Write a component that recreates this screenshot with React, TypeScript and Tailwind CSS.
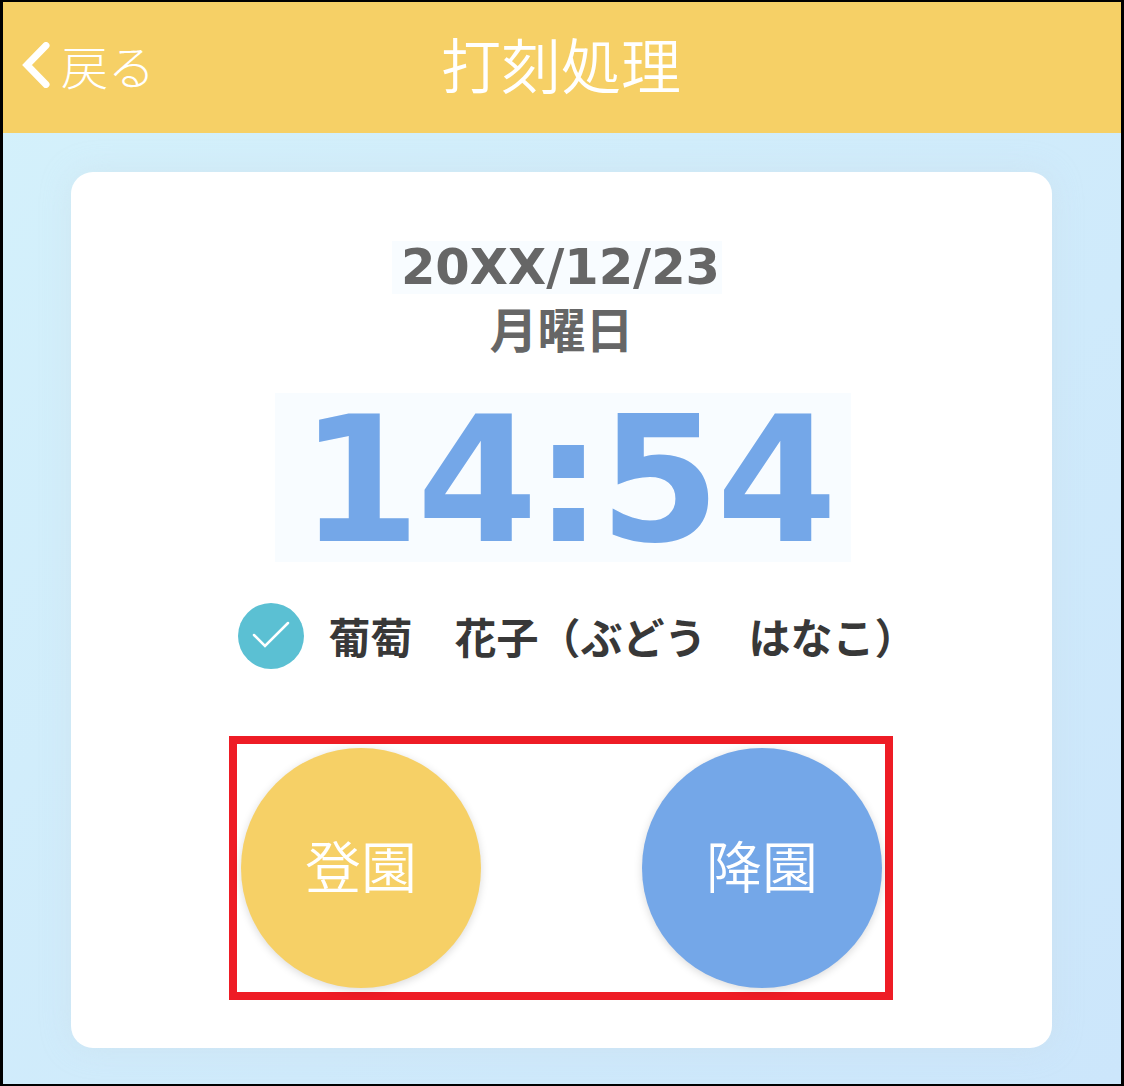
import React from "react";

const jp = "font-['Noto_Sans_CJK_JP','Noto_Sans',sans-serif]";
const mixed = "font-['DejaVu_Sans','Noto_Sans_CJK_JP',sans-serif]";

export default function App() {
  return (
    <div className={`w-[1124px] h-[1086px] flex flex-col border-black border-t-2 border-b-2 border-l-[3px] border-r-[3px] bg-gradient-to-br from-[#d4f1fb] to-[#cce6fb] ${jp}`}>
      <header className="relative h-[131px] shrink-0 bg-[#f6d066] flex items-center justify-center">
        <div className="absolute left-[19px] top-[33px] flex items-center text-white">
          <svg width="28" height="46" viewBox="0 0 28 46" className="mr-[11px]" fill="none">
            <path d="M24 3.5 L5 23 L24 42.5" stroke="#fff" strokeWidth="7" strokeLinecap="round" strokeLinejoin="miter" />
          </svg>
          <span className="text-[47px] leading-[60px] font-light">戻る</span>
        </div>
        <h1 className="text-[60px] leading-[80px] font-[350] text-white -mt-[10px] -ml-[2px]">打刻処理</h1>
      </header>
      <main className="flex-1 flex flex-col pt-[39px] pl-[68px] pr-[68px] pb-[36px]">
        <section className="h-[876px] w-[981px] bg-white rounded-[22px] shadow-[0_0_30px_rgba(200,215,225,0.35)] flex flex-col items-center pt-[69px]">
          <div className={`bg-[#f8fcff] w-[330px] -ml-[9px] pl-[7px] h-[53px] flex items-center justify-center text-[49.5px] font-bold text-[#666666] ${mixed}`}>20XX/12/23</div>
          <div className="mt-[2px] h-[62px] text-[48px] leading-[62px] font-bold text-[#666666]">月曜日</div>
          <div className={`mt-[35px] ml-[3px] w-[576px] h-[169px] bg-[#f8fcff] pl-[7px] pt-[7px] flex items-center justify-center text-[174px] tracking-[-4px] leading-none font-bold text-[#74a7e8] ${mixed}`}>14:54</div>
          <div className="mt-[41px] ml-[32px] h-[66px] flex items-center text-[#383838]">
            <div className="w-[66px] h-[66px] rounded-full bg-[#5bc0d3] flex items-center justify-center">
              <svg width="40" height="30" viewBox="0 0 40 30" fill="none">
                <path d="M3 14 L14 25 L37 2" stroke="#fff" strokeWidth="2.5" strokeLinecap="round" strokeLinejoin="miter" />
              </svg>
            </div>
            <span className="ml-[24px] text-[42px] leading-[66px] font-bold">葡萄　花子（ぶどう　はなこ）</span>
          </div>
          <div className="mt-[67px] -ml-[1px] w-[664px] h-[264px] border-[8px] border-[#ee1c25] flex justify-between items-center pl-[4px] pr-[3px]">
            <button className="w-[240px] h-[240px] rounded-full bg-[#f6d066] shadow-[0_2px_8px_rgba(0,0,0,0.15)] text-white text-[56px] font-[350] pb-[8px] flex items-center justify-center">登園</button>
            <button className="w-[240px] h-[240px] rounded-full bg-[#74a7e8] shadow-[0_2px_8px_rgba(0,0,0,0.15)] text-white text-[56px] font-[350] pb-[8px] flex items-center justify-center">降園</button>
          </div>
        </section>
      </main>
    </div>
  );
}
